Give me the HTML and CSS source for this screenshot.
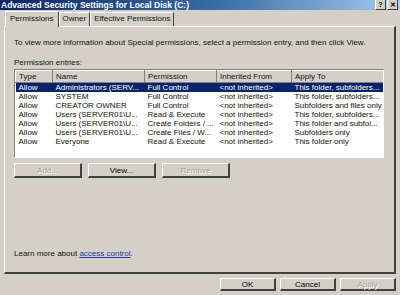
FILE: index.html
```html
<!DOCTYPE html>
<html lang="en">
<head>
    <meta charset="UTF-8">
    <title>Advanced Security Settings</title>
    <link rel="stylesheet" href="styles.css">
</head>
<body>
    <div class="window">
        <div class="titlebar">
            <span class="title">Advanced Security Settings for Local Disk (C:)</span>
            <div class="caption-btns">
                <span class="cap-btn">?</span>
                <span class="cap-btn">&#x2715;</span>
            </div>
        </div>

        <div class="tabs">
            <span class="tab active">Permissions</span>
            <span class="tab">Owner</span>
            <span class="tab">Effective Permissions</span>
        </div>

        <div class="panel">
            <p class="intro">To view more information about Special permissions, select a permission entry, and then click View.</p>
            <p class="label">Permission entries:</p>

            <div class="listbox">
                <table>
                    <thead>
                        <tr>
                            <th class="c-type">Type</th>
                            <th class="c-name">Name</th>
                            <th class="c-perm">Permission</th>
                            <th class="c-inh">Inherited From</th>
                            <th class="c-apply">Apply To</th>
                        </tr>
                    </thead>
                    <tbody>
                        <tr class="selected">
                            <td>Allow</td>
                            <td>Administrators (SERV...</td>
                            <td>Full Control</td>
                            <td>&lt;not inherited&gt;</td>
                            <td>This folder, subfolders...</td>
                        </tr>
                        <tr>
                            <td>Allow</td>
                            <td>SYSTEM</td>
                            <td>Full Control</td>
                            <td>&lt;not inherited&gt;</td>
                            <td>This folder, subfolders...</td>
                        </tr>
                        <tr>
                            <td>Allow</td>
                            <td>CREATOR OWNER</td>
                            <td>Full Control</td>
                            <td>&lt;not inherited&gt;</td>
                            <td>Subfolders and files only</td>
                        </tr>
                        <tr>
                            <td>Allow</td>
                            <td>Users (SERVER01\U...</td>
                            <td>Read &amp; Execute</td>
                            <td>&lt;not inherited&gt;</td>
                            <td>This folder, subfolders...</td>
                        </tr>
                        <tr>
                            <td>Allow</td>
                            <td>Users (SERVER01\U...</td>
                            <td>Create Folders / ...</td>
                            <td>&lt;not inherited&gt;</td>
                            <td>This folder and subfol...</td>
                        </tr>
                        <tr>
                            <td>Allow</td>
                            <td>Users (SERVER01\U...</td>
                            <td>Create Files / W...</td>
                            <td>&lt;not inherited&gt;</td>
                            <td>Subfolders only</td>
                        </tr>
                        <tr>
                            <td>Allow</td>
                            <td>Everyone</td>
                            <td>Read &amp; Execute</td>
                            <td>&lt;not inherited&gt;</td>
                            <td>This folder only</td>
                        </tr>
                    </tbody>
                </table>
            </div>

            <div class="entry-btns">
                <button class="btn disabled">Add...</button>
                <button class="btn">View...</button>
                <button class="btn disabled">Remove</button>
            </div>

            <p class="learn">Learn more about <a href="#">access control</a>.</p>
        </div>

        <div class="dialog-btns">
            <button class="btn dlg">OK</button>
            <button class="btn dlg">Cancel</button>
            <button class="btn dlg disabled">Apply</button>
        </div>
    </div>
</body>
</html>
```

FILE: styles.css
```css
* {
    margin: 0;
    padding: 0;
    box-sizing: border-box;
}

body {
    font-family: 'Liberation Sans', Arial, sans-serif;
    font-size: 8px;
    color: #111;
    background-color: #d4d0c8;
}

.window {
    width: 400px;
    height: 295px;
    background-color: #d4d0c8;
    display: flex;
    flex-direction: column;
    overflow: hidden;
}

/* Title bar */
.titlebar {
    height: 10px;
    background: linear-gradient(to right, #0a246a, #3a6ea5 55%, #a6caf0);
    display: flex;
    justify-content: space-between;
    align-items: center;
    color: #fff;
}

.titlebar .title {
    font-family: 'Liberation Sans', sans-serif;
    font-weight: bold;
    font-size: 8.5px;
    line-height: 10px;
    padding-left: 1px;
}

.caption-btns {
    display: flex;
    gap: 1px;
    padding-right: 2px;
}

.cap-btn {
    width: 11px;
    height: 10px;
    background-color: #d4d0c8;
    color: #000;
    font-weight: bold;
    font-size: 7px;
    line-height: 9px;
    text-align: center;
    border-right: 1px solid #404040;
    border-bottom: 1px solid #404040;
    border-left: 1px solid #fff;
}

/* Tabs */
.tabs {
    display: flex;
    padding: 1px 0 0 5px;
    height: 16px;
    align-items: flex-end;
}

.tab {
    padding: 1px 3px 2px;
    border-top: 1px solid #fff;
    border-left: 1px solid #fff;
    border-right: 1px solid #404040;
    margin-top: 2px;
    font-size: 8px;
    line-height: 10px;
}

.tab.active {
    padding: 2px 4px 3px;
    margin-top: 0;
    background-color: #d4d0c8;
    position: relative;
    z-index: 1;
    margin-bottom: -1px;
}

/* Panel */
.panel {
    margin: 0 4px;
    height: 248px;
    border-top: 1px solid #fff;
    border-left: 1px solid #fff;
    border-right: 2px solid #404040;
    border-bottom: 2px solid #404040;
    padding: 11px 9px 0;
    display: flex;
    flex-direction: column;
}

.intro {
    font-size: 8px;
    line-height: 10px;
}

.label {
    margin-top: 10px;
    line-height: 10px;
}

.listbox {
    margin-top: 1px;
    height: 89px;
    width: 370px;
    background-color: #fff;
    border-top: 1px solid #808080;
    border-left: 1px solid #808080;
    border-right: 1px solid #fff;
    border-bottom: 1px solid #fff;
    overflow: hidden;
}

table {
    border-collapse: collapse;
    table-layout: fixed;
    width: 368px;
}

th {
    background-color: #d4d0c8;
    font-weight: normal;
    text-align: left;
    height: 12px;
    padding: 0 3px;
    border-right: 1px solid #808080;
    border-bottom: 1px solid #808080;
    border-top: 1px solid #fff;
    border-left: 1px solid #fff;
    font-size: 8px;
    white-space: nowrap;
}

td {
    height: 9px;
    line-height: 9px;
    padding: 0 3px;
    white-space: nowrap;
    overflow: hidden;
    font-size: 8px;
}

.c-type { width: 37px; }
.c-name { width: 92px; }
.c-perm { width: 72px; }
.c-inh { width: 75px; }
.c-apply { width: 92px; }

tr.selected td {
    background-color: #0a246a;
    color: #fff;
}

/* Buttons */
.entry-btns {
    display: flex;
    gap: 6px;
    margin-top: 5px;
}

.btn {
    font-family: 'Liberation Sans', Arial, sans-serif;
    font-size: 8px;
    width: 68px;
    height: 15px;
    background-color: #d4d0c8;
    color: #000;
    border-top: 1px solid #fff;
    border-left: 1px solid #fff;
    border-right: 2px solid #404040;
    border-bottom: 2px solid #404040;
}

.btn.disabled {
    color: #a0a0a0;
    text-shadow: 1px 1px 0 #fff;
}

.learn {
    margin-top: auto;
    margin-bottom: 13px;
    line-height: 10px;
}

.learn a {
    color: #1a3aa0;
}

.dialog-btns {
    display: flex;
    justify-content: flex-end;
    gap: 4px;
    padding: 4px 4px 0 0;
}

.btn.dlg {
    width: 56px;
    height: 13px;
}
```
